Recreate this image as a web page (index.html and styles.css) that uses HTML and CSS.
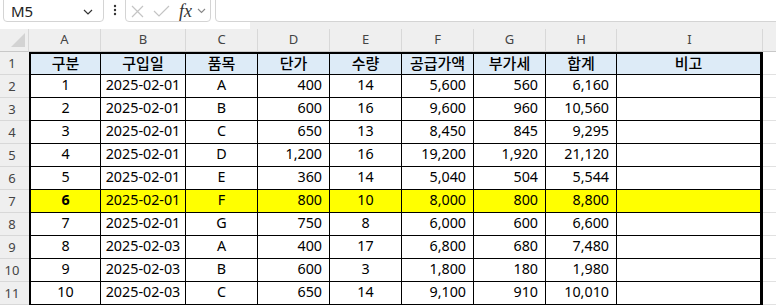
FILE: index.html
```html
<!DOCTYPE html>
<html lang="ko">
<head>
<meta charset="utf-8">
<title>Sheet</title>
<link rel="stylesheet" href="styles.css">
</head>
<body>
<div class="topbar">
  <div class="namebox">
    <span class="nb-text">M5</span>
    <svg class="nb-chev" width="10" height="6" viewBox="0 0 10 6"><path d="M1 1 L5 5 L9 1" fill="none" stroke="#333" stroke-width="1.2"/></svg>
  </div>
  <svg class="dots" width="4" height="12" viewBox="0 0 4 12"><circle cx="2" cy="2" r="1.2" fill="#333"/><circle cx="2" cy="6" r="1.2" fill="#333"/><circle cx="2" cy="10" r="1.2" fill="#333"/></svg>
  <div class="fbtns">
    <svg class="ic-x" width="13" height="13" viewBox="0 0 13 13"><path d="M1 1 L12 12 M12 1 L1 12" stroke="#c4c4c4" stroke-width="1.2" fill="none"/></svg>
    <svg class="ic-ok" width="17" height="12" viewBox="0 0 17 12"><path d="M1 6 L6 11 L16 1" stroke="#c4c4c4" stroke-width="1.2" fill="none"/></svg>
    <span class="fx">fx</span>
    <svg class="fx-chev" width="9" height="6" viewBox="0 0 9 6"><path d="M1 1 L4.5 4.5 L8 1" fill="none" stroke="#888" stroke-width="1.1"/></svg>
  </div>
  <div class="formula"></div>
</div>
<div class="strip"><div class="strip-l"></div><div class="strip-r"></div></div>
<div class="sheet">
  <div class="corner"><svg width="14" height="14" viewBox="0 0 14 14"><path d="M14 0 L14 14 L0 14 Z" fill="#d3d3d3"/></svg></div>
  <div class="ch">A</div><div class="ch">B</div><div class="ch">C</div><div class="ch">D</div><div class="ch">E</div><div class="ch">F</div><div class="ch">G</div><div class="ch">H</div><div class="ch">I</div><div class="ch chj"></div>

  <div class="rh">1</div>
  <div class="c hd a">구분</div><div class="c hd">구입일</div><div class="c hd">품목</div><div class="c hd">단가</div><div class="c hd">수량</div><div class="c hd">공급가액</div><div class="c hd">부가세</div><div class="c hd">합계</div><div class="c hd i">비고</div><div class="j"></div>

  <div class="rh">2</div>
  <div class="c a">1</div><div class="c">2025-02-01</div><div class="c">A</div><div class="c r">400</div><div class="c">14</div><div class="c r">5,600</div><div class="c r">560</div><div class="c r">6,160</div><div class="c i"></div><div class="j"></div>

  <div class="rh">3</div>
  <div class="c a">2</div><div class="c">2025-02-01</div><div class="c">B</div><div class="c r">600</div><div class="c">16</div><div class="c r">9,600</div><div class="c r">960</div><div class="c r">10,560</div><div class="c i"></div><div class="j"></div>

  <div class="rh">4</div>
  <div class="c a">3</div><div class="c">2025-02-01</div><div class="c">C</div><div class="c r">650</div><div class="c">13</div><div class="c r">8,450</div><div class="c r">845</div><div class="c r">9,295</div><div class="c i"></div><div class="j"></div>

  <div class="rh">5</div>
  <div class="c a">4</div><div class="c">2025-02-01</div><div class="c">D</div><div class="c r">1,200</div><div class="c">16</div><div class="c r">19,200</div><div class="c r">1,920</div><div class="c r">21,120</div><div class="c i"></div><div class="j"></div>

  <div class="rh">6</div>
  <div class="c a">5</div><div class="c">2025-02-01</div><div class="c">E</div><div class="c r">360</div><div class="c">14</div><div class="c r">5,040</div><div class="c r">504</div><div class="c r">5,544</div><div class="c i"></div><div class="j"></div>

  <div class="rh">7</div>
  <div class="c a y b">6</div><div class="c y">2025-02-01</div><div class="c y">F</div><div class="c r y">800</div><div class="c y">10</div><div class="c r y">8,000</div><div class="c r y">800</div><div class="c r y">8,800</div><div class="c i y"></div><div class="j"></div>

  <div class="rh">8</div>
  <div class="c a">7</div><div class="c">2025-02-01</div><div class="c">G</div><div class="c r">750</div><div class="c">8</div><div class="c r">6,000</div><div class="c r">600</div><div class="c r">6,600</div><div class="c i"></div><div class="j"></div>

  <div class="rh">9</div>
  <div class="c a">8</div><div class="c">2025-02-03</div><div class="c">A</div><div class="c r">400</div><div class="c">17</div><div class="c r">6,800</div><div class="c r">680</div><div class="c r">7,480</div><div class="c i"></div><div class="j"></div>

  <div class="rh">10</div>
  <div class="c a">9</div><div class="c">2025-02-03</div><div class="c">B</div><div class="c r">600</div><div class="c">3</div><div class="c r">1,800</div><div class="c r">180</div><div class="c r">1,980</div><div class="c i"></div><div class="j"></div>

  <div class="rh">11</div>
  <div class="c a">10</div><div class="c">2025-02-03</div><div class="c">C</div><div class="c r">650</div><div class="c">14</div><div class="c r">9,100</div><div class="c r">910</div><div class="c r">10,010</div><div class="c i"></div><div class="j"></div>
</div>
</body>
</html>
```

FILE: styles.css
```css
* { box-sizing: border-box; }
html, body { margin: 0; padding: 0; background: #fff; }
body {
  width: 776px;
  height: 306px;
  overflow: hidden;
  font-family: "Noto Sans", "Noto Sans CJK KR", sans-serif;
  color: #000;
}

.topbar {
  height: 22px;
  display: flex;
  align-items: flex-end;
  overflow: hidden;
  background: #fff;
}
.namebox {
  margin-left: 3px;
  width: 101px;
  height: 27px;
  border: 1px solid #d4d4d4;
  border-radius: 4px;
  display: flex;
  align-items: center;
  padding: 5px 0 0 7px;
  flex: none;
}
.nb-text {
  font-size: 15px;
  color: #222;
  line-height: 16px;
  width: 72px;
}
.nb-chev { margin-top: 1px; }
.dots {
  flex: none;
  margin: 0 8px 6px 9px;
}
.fbtns {
  flex: none;
  width: 86px;
  height: 27px;
  border: 1px solid #d4d4d4;
  border-radius: 4px;
  display: flex;
  align-items: center;
  padding: 5px 0 0 5px;
}
.ic-x { margin-right: 9px; }
.ic-ok { margin-right: 9px; }
.fx {
  font-family: "Liberation Serif", "DejaVu Serif", serif;
  font-style: italic;
  font-size: 18px;
  line-height: 16px;
  color: #333;
  margin-right: 5px;
}
.formula {
  flex: none;
  margin-left: 4px;
  width: 600px;
  height: 27px;
  border: 1px solid #d4d4d4;
  border-radius: 4px;
}

.strip { display: flex; height: 7px; }
.strip-l { width: 250px; background: #fff; }
.strip-r { flex: 1; background: #efefef; }

.sheet {
  display: grid;
  grid-template-columns: 29px 72px 85px 72px 72px 72px 72px 72px 71px 146px 1fr;
  grid-template-rows: repeat(12, 23px);
}

.corner {
  background: #efefef;
  border-bottom: 1px solid #c8c8c8;
  border-right: 1px solid #d8d8d8;
  display: flex;
  align-items: flex-end;
  justify-content: flex-end;
  padding: 0 3px 4px 0;
}
.ch {
  background: #efefef;
  border-right: 1px solid #d8d8d8;
  border-bottom: 1px solid #c8c8c8;
  font-size: 13px;
  color: #444;
  text-align: center;
  line-height: 21px;
}
.chj { border-right: none; }

.rh {
  background: #efefef;
  border-bottom: 1px solid #d8d8d8;
  font-size: 13px;
  color: #444;
  text-align: center;
  padding-right: 5px;
  line-height: 22px;
}

.c {
  border-right: 1px solid #000;
  border-bottom: 1px solid #000;
  font-size: 14.3px;
  line-height: 20px;
  text-align: center;
  white-space: nowrap;
  background: #fff;
}
.c.a { border-left: 2px solid #000; }
.c.i { border-right: 3px solid #000; }
.c.r { text-align: right; padding-right: 7px; }
.c.hd {
  background: #ddebf7;
  border-top: 2px solid #000;
  font-family: "Noto Sans CJK KR", sans-serif;
  font-size: 15px;
  font-weight: 500;
  line-height: 18px;
}
.c.y { background: #ffff00; }
.c.b { font-weight: 700; }

.j {
  background: #fff;
  border-bottom: 1px solid #e1e1e1;
}
```
